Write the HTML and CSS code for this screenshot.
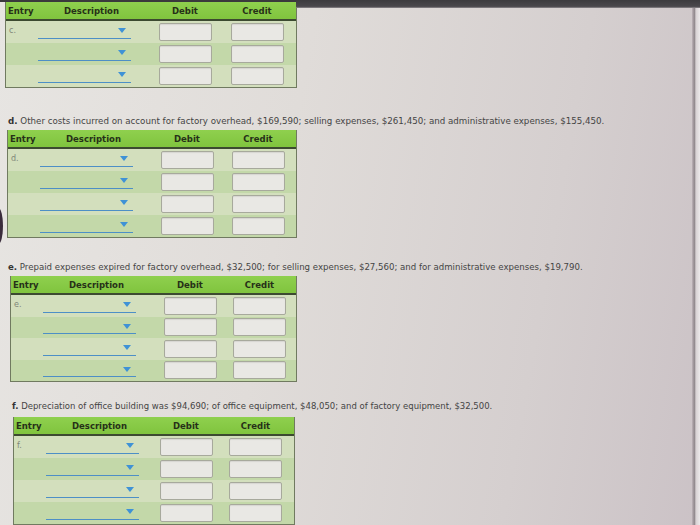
FILE: index.html
```html
<!DOCTYPE html>
<html>
<head>
<meta charset="utf-8">
<link rel="stylesheet" href="styles.css">
</head>
<body>
<div class="bezel"></div>
<div class="edge"></div>
<div class="page">
  <div class="tbl t1">
    <div class="hdr"><span class="h-entry">Entry</span><span class="h-desc">Description</span><span class="h-debit">Debit</span><span class="h-credit">Credit</span></div>
    <div class="row odd"><span class="entry">c.</span><span class="desc"><span class="line"></span><span class="tri"></span></span><span class="cell"><span class="box"></span></span><span class="cell"><span class="box"></span></span></div>
    <div class="row even"><span class="entry"></span><span class="desc"><span class="line"></span><span class="tri"></span></span><span class="cell"><span class="box"></span></span><span class="cell"><span class="box"></span></span></div>
    <div class="row odd"><span class="entry"></span><span class="desc"><span class="line"></span><span class="tri"></span></span><span class="cell"><span class="box"></span></span><span class="cell"><span class="box"></span></span></div>
  </div>

  <p class="q q-d"><b>d.</b> Other costs incurred on account for factory overhead, $169,590; selling expenses, $261,450; and administrative expenses, $155,450.</p>
  <div class="tbl t2">
    <div class="hdr"><span class="h-entry">Entry</span><span class="h-desc">Description</span><span class="h-debit">Debit</span><span class="h-credit">Credit</span></div>
    <div class="row odd"><span class="entry">d.</span><span class="desc"><span class="line"></span><span class="tri"></span></span><span class="cell"><span class="box"></span></span><span class="cell"><span class="box"></span></span></div>
    <div class="row even"><span class="entry"></span><span class="desc"><span class="line"></span><span class="tri"></span></span><span class="cell"><span class="box"></span></span><span class="cell"><span class="box"></span></span></div>
    <div class="row odd"><span class="entry"></span><span class="desc"><span class="line"></span><span class="tri"></span></span><span class="cell"><span class="box"></span></span><span class="cell"><span class="box"></span></span></div>
    <div class="row even"><span class="entry"></span><span class="desc"><span class="line"></span><span class="tri"></span></span><span class="cell"><span class="box"></span></span><span class="cell"><span class="box"></span></span></div>
  </div>

  <p class="q q-e"><b>e.</b> Prepaid expenses expired for factory overhead, $32,500; for selling expenses, $27,560; and for administrative expenses, $19,790.</p>
  <div class="tbl t3">
    <div class="hdr"><span class="h-entry">Entry</span><span class="h-desc">Description</span><span class="h-debit">Debit</span><span class="h-credit">Credit</span></div>
    <div class="row odd"><span class="entry">e.</span><span class="desc"><span class="line"></span><span class="tri"></span></span><span class="cell"><span class="box"></span></span><span class="cell"><span class="box"></span></span></div>
    <div class="row even"><span class="entry"></span><span class="desc"><span class="line"></span><span class="tri"></span></span><span class="cell"><span class="box"></span></span><span class="cell"><span class="box"></span></span></div>
    <div class="row odd"><span class="entry"></span><span class="desc"><span class="line"></span><span class="tri"></span></span><span class="cell"><span class="box"></span></span><span class="cell"><span class="box"></span></span></div>
    <div class="row even"><span class="entry"></span><span class="desc"><span class="line"></span><span class="tri"></span></span><span class="cell"><span class="box"></span></span><span class="cell"><span class="box"></span></span></div>
  </div>

  <p class="q q-f"><b>f.</b> Depreciation of office building was $94,690; of office equipment, $48,050; and of factory equipment, $32,500.</p>
  <div class="tbl t4">
    <div class="hdr"><span class="h-entry">Entry</span><span class="h-desc">Description</span><span class="h-debit">Debit</span><span class="h-credit">Credit</span></div>
    <div class="row odd"><span class="entry">f.</span><span class="desc"><span class="line"></span><span class="tri"></span></span><span class="cell"><span class="box"></span></span><span class="cell"><span class="box"></span></span></div>
    <div class="row even"><span class="entry"></span><span class="desc"><span class="line"></span><span class="tri"></span></span><span class="cell"><span class="box"></span></span><span class="cell"><span class="box"></span></span></div>
    <div class="row odd"><span class="entry"></span><span class="desc"><span class="line"></span><span class="tri"></span></span><span class="cell"><span class="box"></span></span><span class="cell"><span class="box"></span></span></div>
    <div class="row even"><span class="entry"></span><span class="desc"><span class="line"></span><span class="tri"></span></span><span class="cell"><span class="box"></span></span><span class="cell"><span class="box"></span></span></div>
  </div>
</div>
<div class="knob"></div>
</body>
</html>
```
FILE: styles.css
```css
html, body {
  margin: 0;
  padding: 0;
  height: 525px;
  overflow: hidden;
}
body {
  position: relative;
  font-family: "DejaVu Sans", Verdana, sans-serif;
  color: #3b3b3b;
  background: linear-gradient(100deg, #e7e5e2 0%, #e0dcd9 40%, #d5cfcf 75%, #cbc2c6 100%);
}
.bezel {
  position: absolute;
  top: 0;
  left: 0;
  right: 0;
  height: 2px;
  background: #3a3a3c;
}
.bezel::after {
  content: "";
  position: absolute;
  left: 296px;
  right: 0;
  top: 0;
  height: 8px;
  background: linear-gradient(180deg, #3c3b3e 0%, #4a484c 80%, #8e8a8e 100%);
}
.edge {
  position: absolute;
  top: 8px;
  bottom: 0;
  right: 0;
  width: 8px;
  background: linear-gradient(90deg, #bdb3b8 0%, #8f878b 30%, #d8d2d4 50%, #ece9ea 100%);
}
.knob {
  position: absolute;
  left: -6px;
  top: 208px;
  width: 9px;
  height: 36px;
  border-radius: 50%;
  background: #3a2c3c;
}
.page {
  padding-top: 2px;
}
.tbl {
  width: 290px;
  border: 1px solid #707a60;
  border-top: none;
  background: #d2deba;
}
.t1 { margin-left: 5px; }
.t2 { margin-left: 7px; width: 288px; }
.t3 { margin-left: 10px; width: 285px; }
.t4 { margin-left: 13px; width: 280px; }

.hdr, .row {
  display: grid;
  grid-template-columns: 30px 110px 78px 1fr;
  align-items: center;
}
.t4 .hdr, .t4 .row {
  grid-template-columns: 30px 105px 74px 1fr;
}
.hdr {
  height: 17px;
  background: linear-gradient(180deg, #8fd04e 0%, #80c43e 100%);
  border-bottom: 2px solid #3c4a30;
  font-weight: bold;
  font-size: 8.5px;
  color: #263018;
}
.h-entry { padding-left: 2px; }
.h-desc { padding-left: 28px; }
.h-debit, .h-credit { text-align: center; }
.h-credit { padding-right: 6px; }

.row {
  height: 22px;
  align-items: stretch;
}
.t3 .row { height: 21.5px; }
.odd { background: #d3dfbd; }
.even { background: #c3d8a9; }

.entry {
  font-size: 8px;
  color: #7f8677;
  padding-left: 3px;
  padding-top: 5px;
}
.desc {
  position: relative;
}
.line {
  position: absolute;
  left: 2px;
  width: 93px;
  bottom: 4px;
  height: 1px;
  background: #4d8fc6;
}
.tri {
  position: absolute;
  left: 82px;
  top: 7px;
  width: 0;
  height: 0;
  border-left: 4px solid transparent;
  border-right: 4px solid transparent;
  border-top: 5px solid #3f92d6;
}
.cell {
  display: flex;
  justify-content: center;
  align-items: center;
}
.cell:last-child { padding-right: 6px; }
.box {
  width: 51px;
  height: 16px;
  background: #e9e8e4;
  border: 1px solid #a7a99c;
  border-radius: 2px;
  box-shadow: inset 0 1px 1px rgba(0,0,0,0.08);
}
.q {
  margin: 0;
  font-size: 8.7px;
  line-height: 10px;
  color: #444;
  white-space: nowrap;
}
.q b { color: #333; }
.q-d { padding: 28px 0 4px 8px; }
.q-e { padding: 24px 0 4px 8px; font-size: 8.6px; }
.q-f { padding: 19px 0 6px 12px; font-size: 8.5px; }
```
